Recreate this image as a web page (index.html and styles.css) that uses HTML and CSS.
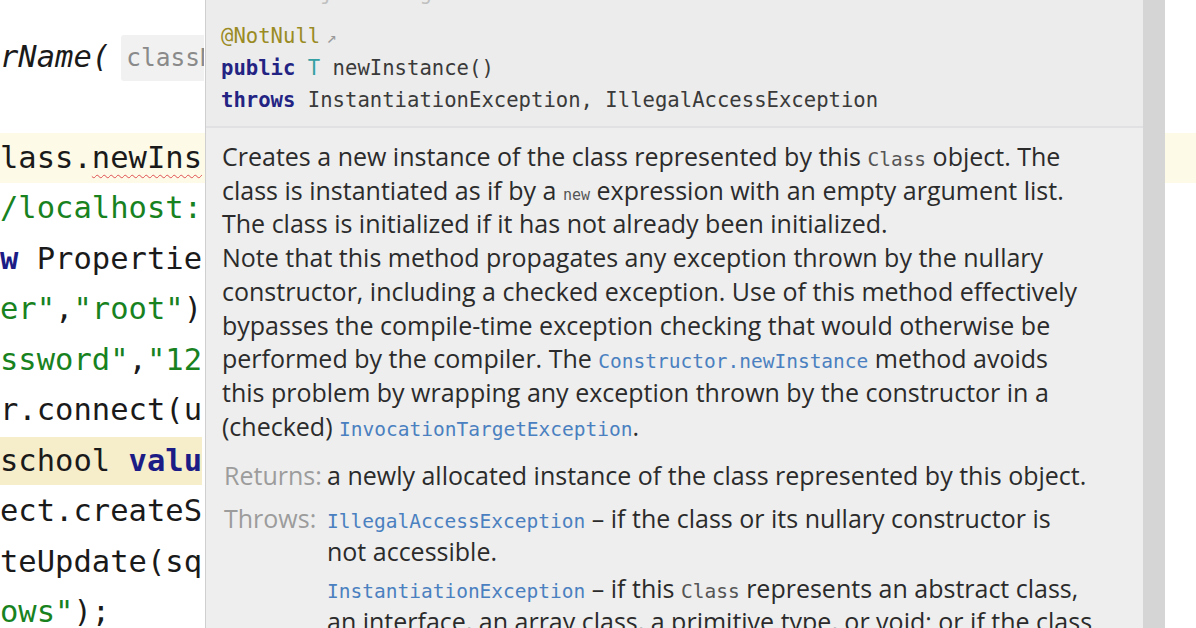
FILE: index.html
```html
<!DOCTYPE html>
<html>
<head>
<meta charset="utf-8">
<link rel="stylesheet" href="styles.css">
</head>
<body>
<div class="screen">
  <div class="editor">
    <div class="line"><span class="code"><span class="it">rName(</span><span class="hint">classN</span></span></div>
    <div class="line"><span class="code"></span></div>
    <div class="line caret"><span class="code">lass.<span class="err">newIns</span></span></div>
    <div class="line"><span class="code"><span class="str">/localhost:</span></span></div>
    <div class="line"><span class="code"><span class="kw">w</span> Propertie</span></div>
    <div class="line"><span class="code"><span class="str">er"</span>,<span class="str">"root"</span>)</span></div>
    <div class="line"><span class="code"><span class="str">ssword"</span>,<span class="str">"12</span></span></div>
    <div class="line"><span class="code">r.connect(u</span></div>
    <div class="line"><span class="code"><span class="sql">school <span class="kw">valu</span></span></span></div>
    <div class="line"><span class="code">ect.createS</span></div>
    <div class="line"><span class="code">teUpdate(sq</span></div>
    <div class="line"><span class="code"><span class="str">ows"</span>);</span></div>
  </div>

  <div class="popup">
    <div class="doc">
      <div class="head">
        <div class="cut"><span class="teal">&lt; 1.8 &gt;</span> <span class="faint">java.lang.Class</span></div>
        <div class="sig"><span class="anno">@NotNull</span><span class="arrow">↗</span></div>
        <div class="sig"><span class="kw">public</span> <span class="tp">T</span> newInstance()</div>
        <div class="sig"><span class="kw">throws</span> InstantiationException, IllegalAccessException</div>
      </div>
      <div class="body">
        <p class="desc">Creates a new instance of the class represented by this <code>Class</code> object. The<br>
        class is instantiated as if by a <code class="sm">new</code> expression with an empty argument list.<br>
        The class is initialized if it has not already been initialized.<br>
        Note that this method propagates any exception thrown by the nullary<br>
        constructor, including a checked exception. Use of this method effectively<br>
        bypasses the compile-time exception checking that would otherwise be<br>
        performed by the compiler. The <a class="link">Constructor.newInstance</a> method avoids<br>
        this problem by wrapping any exception thrown by the constructor in a<br>
        (checked) <a class="link">InvocationTargetException</a>.</p>
        <div class="sections">
          <div class="label">Returns:</div>
          <div class="val ret">a newly allocated instance of the class represented by this object.</div>
          <div class="label th">Throws:</div>
          <div class="val th">
            <div class="thr"><a class="link">IllegalAccessException</a> – if the class or its nullary constructor is<br>not accessible.</div>
            <div class="thr"><a class="link">InstantiationException</a> – if this <code>Class</code> represents an abstract class,<br>an interface, an array class, a primitive type, or void; or if the class</div>
          </div>
        </div>
      </div>
    </div>
    <div class="scroll"></div>
  </div>
</div>
</body>
</html>
```
FILE: styles.css
```css
html, body {
  margin: 0;
  padding: 0;
  background: #ffffff;
}
.screen {
  position: relative;
  width: 1196px;
  height: 628px;
  overflow: hidden;
  background: #ffffff;
}
.editor {
  padding-top: 31.75px;
  font-family: "DejaVu Sans Mono", "Liberation Mono", monospace;
  font-size: 30.5px;
  color: #1a1a1a;
}
.line {
  height: 50.5px;
  line-height: 50.5px;
  white-space: pre;
}
.code {
  display: inline-block;
  width: 204px;
  overflow: hidden;
  vertical-align: top;
}
.line.caret {
  background: #fdfae8;
}
.it { font-style: italic; }
.hint {
  display: inline-block;
  margin-left: 11px;
  background: #f1f1f1;
  color: #8a8a8a;
  font-size: 24.5px;
  line-height: 46px;
  padding: 0 0 0 5px;
  border-radius: 3px;
  vertical-align: 1px;
}
.err {
  text-decoration: underline wavy #e05050;
  text-decoration-thickness: 1px;
  text-underline-offset: 6px;
}
.str { color: #18821f; }
.kw { color: #1c1c86; font-weight: bold; }
.sql {
  background: #f6edcb;
  display: inline-block;
  line-height: 48px;
}

.popup {
  position: absolute;
  left: 205px;
  top: 0;
  width: 960px;
  height: 628px;
  display: flex;
  border-left: 1px solid #cfcfcf;
  box-sizing: border-box;
}
.doc {
  flex: 1;
  background: #eeeeee;
  display: flex;
  flex-direction: column;
  overflow: hidden;
}
.scroll {
  width: 22px;
  background: #d5d5d5;
}
.head {
  background: #ececec;
  border-bottom: 2px solid #e1e1e3;
  padding: 0 0 12px 15px;
  height: 128px;
  box-sizing: border-box;
  font-family: "DejaVu Sans Mono", "Liberation Mono", monospace;
  font-size: 20.6px;
  color: #3a3a3a;
}
.cut {
  line-height: 31.5px;
  margin-top: -22px;
  height: 31.5px;
  margin-bottom: 11px;
}
.teal { color: #8cc6cc; }
.faint { color: #c0c0c0; }
.sig {
  line-height: 31.5px;
  white-space: pre;
}
.anno { color: #9a8b24; }
.arrow { color: #9a9a9a; font-size: 17px; margin-left: 6px; }
.tp { color: #35a0a3; }
.head .kw { color: #232383; }

.body {
  padding: 12px 0 0 16px;
  font-family: "Open Sans", "Noto Sans", sans-serif;
  font-size: 25px;
  color: #2b2b2b;
}
.desc {
  margin: 0;
  line-height: 33.7px;
  white-space: nowrap;
}
code {
  font-family: "DejaVu Sans Mono", "Liberation Mono", monospace;
  font-size: 19.5px;
  color: #555555;
  line-height: 1;
}
code.sm { font-size: 15px; }
.link {
  font-family: "DejaVu Sans Mono", "Liberation Mono", monospace;
  font-size: 19.5px;
  color: #4a80c0;
  line-height: 1;
}
.sections {
  display: grid;
  grid-template-columns: 105px 1fr;
  margin-top: 16px;
  white-space: nowrap;
}
.label {
  color: #9c9c9c;
  line-height: 33px;
  padding-left: 2px;
}
.val { line-height: 33px; }
.th { margin-top: 10px; }
.thr { line-height: 33px; margin-bottom: 4px; }
```
